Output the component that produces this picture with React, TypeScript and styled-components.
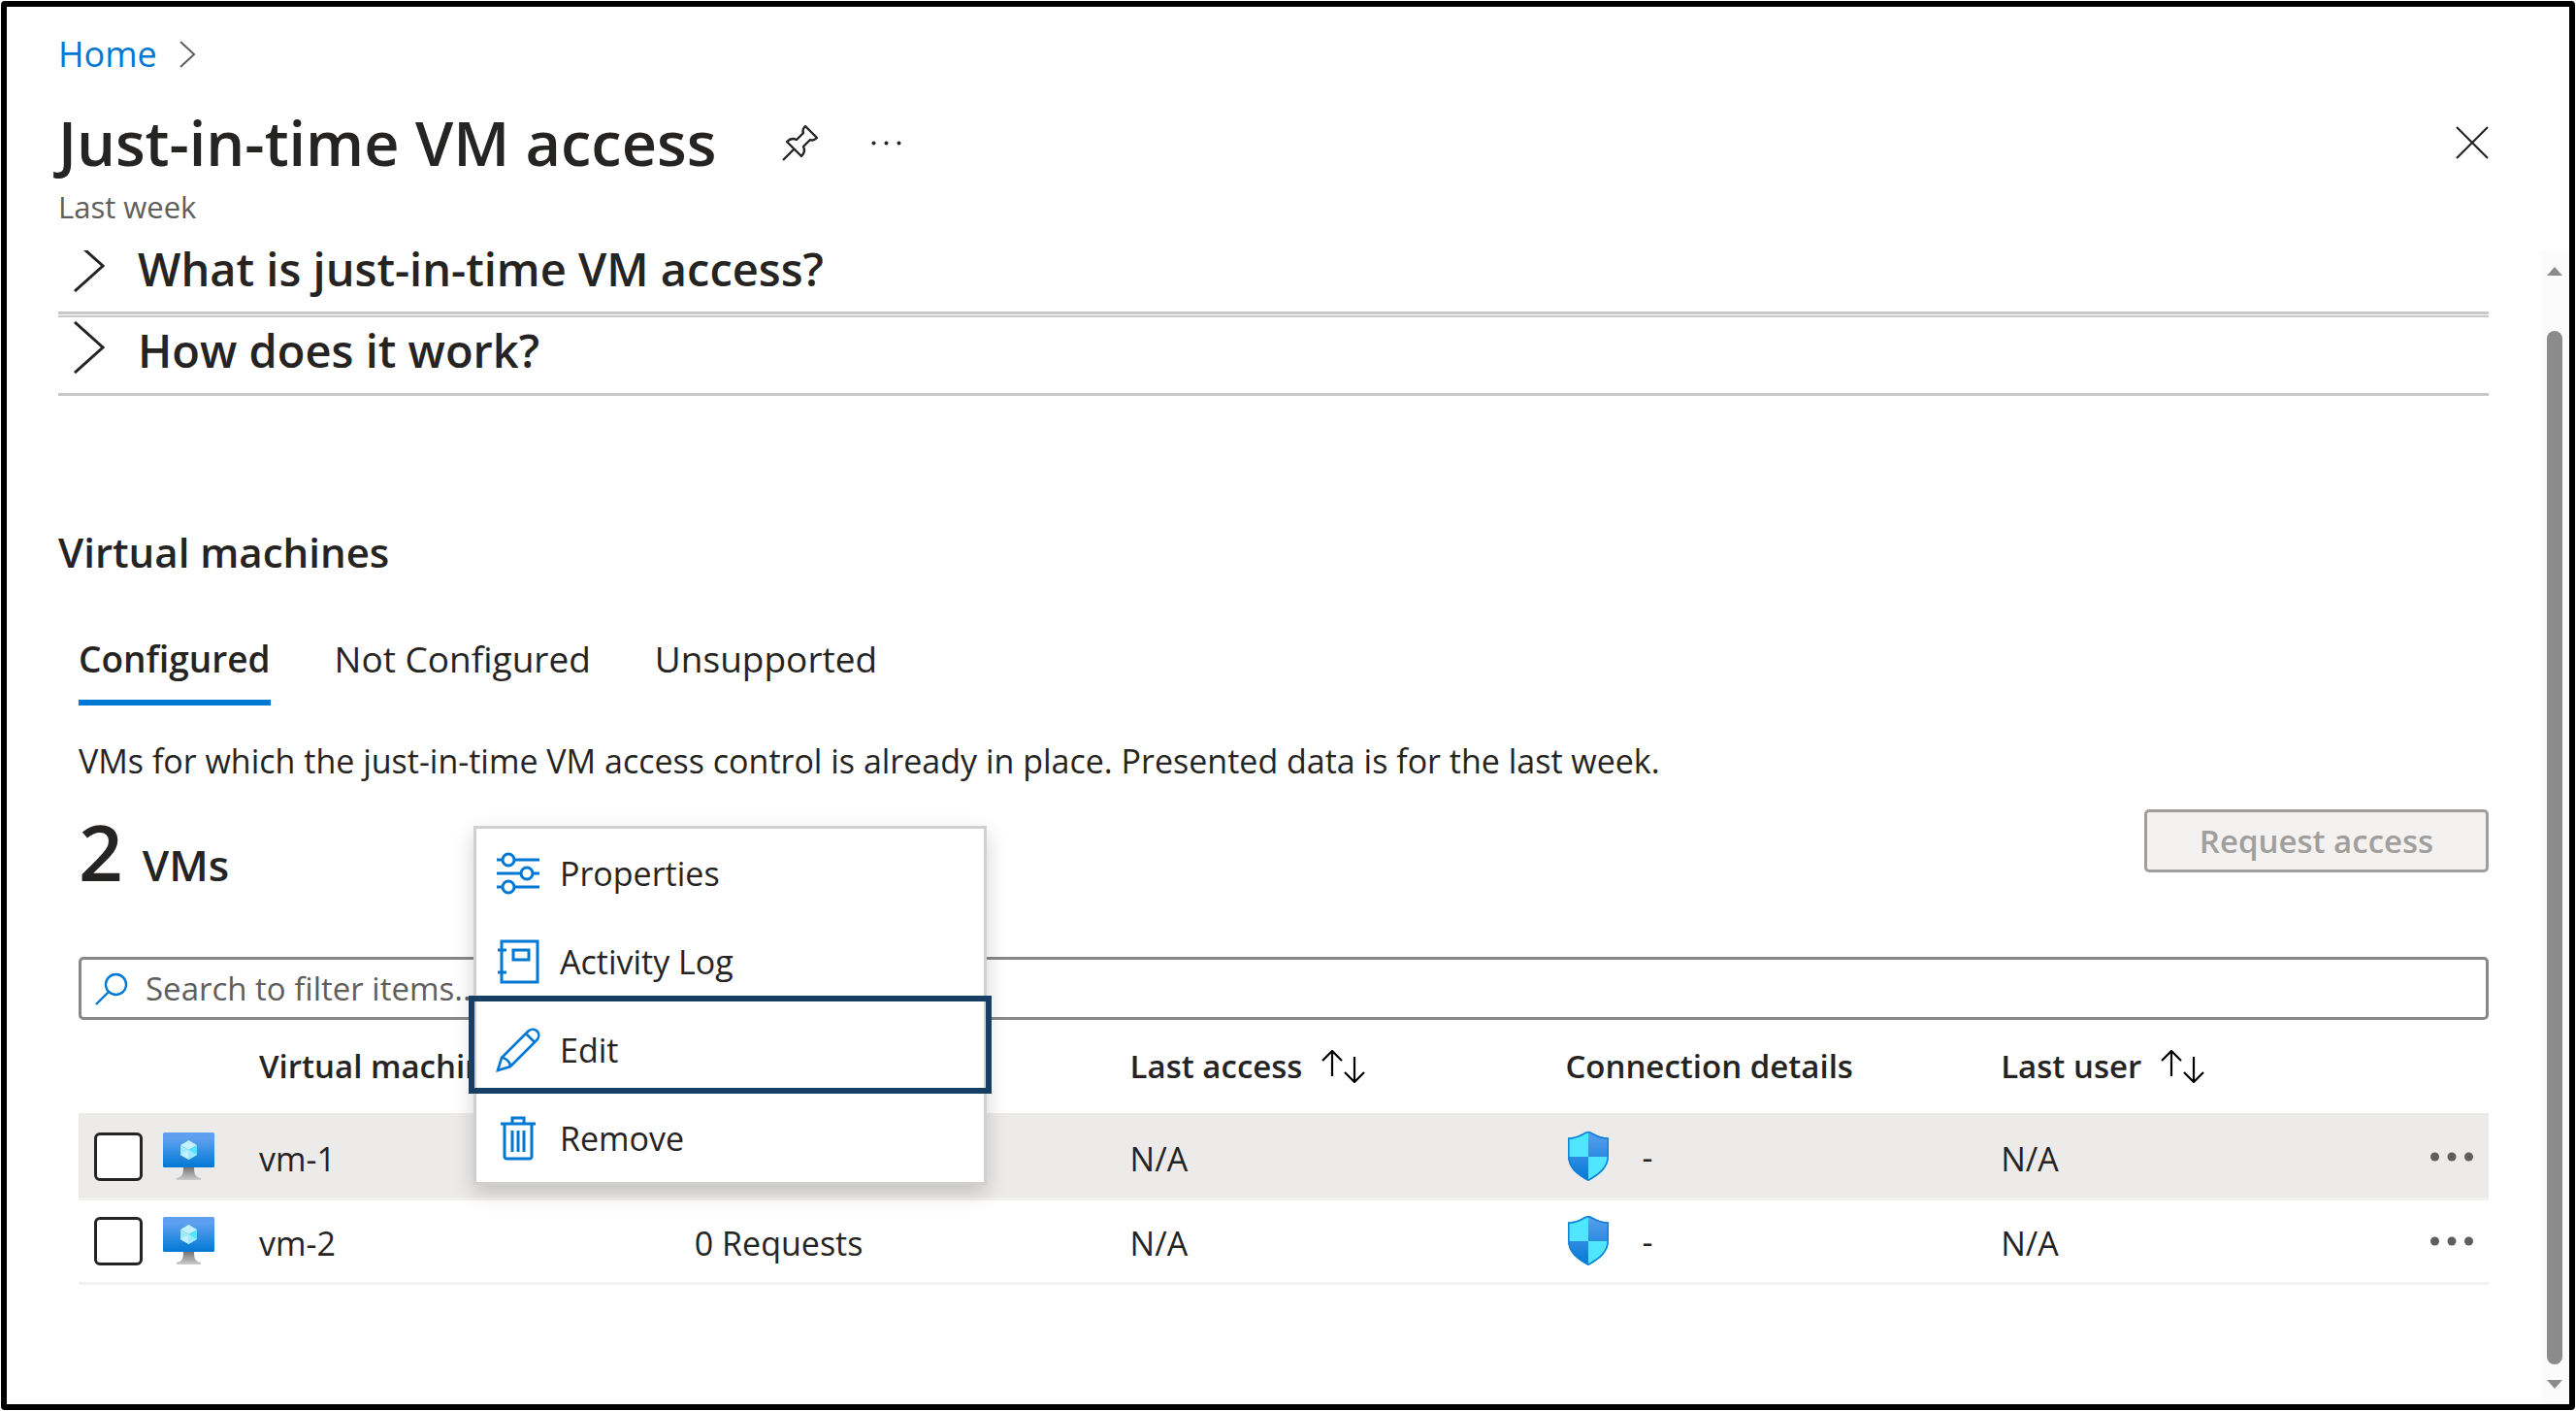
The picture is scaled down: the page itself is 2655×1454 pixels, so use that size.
import React from 'react';
import styled, { createGlobalStyle, css } from 'styled-components';

const GlobalStyle = createGlobalStyle`
  *, *::before, *::after { box-sizing: border-box; }
  body {
    margin: 0;
    background: #fff;
    color: #252423;
    font-family: 'Open Sans', 'Noto Sans', sans-serif;
    font-size: 34px;
    line-height: 48px;
  }
  button, input { font: inherit; color: inherit; }
  h1, h2, p { margin: 0; }
`;

const Frame = styled.div`
  height: 100vh;
  padding: 1px;
  background: #fff;
`;

const Blade = styled.main`
  height: 100%;
  display: flex;
  flex-direction: column;
  border: 6px solid #000;
  border-radius: 4px;
`;

const Header = styled.header`
  padding: 25px 83px 22px 53px;
`;

const Breadcrumb = styled.nav`
  display: flex;
  align-items: center;
  gap: 23px;
  color: #605e5c;
  font-size: 36px;
  line-height: 48px;
`;

const Link = styled.a`
  color: #0078d4;
  text-decoration: none;
`;

const TitleRow = styled.div`
  display: flex;
  align-items: center;
  margin-top: 24px;
`;

const Title = styled.h1`
  font-size: 63px;
  line-height: 86px;
  font-weight: 600;
  margin-right: 68px;
`;

const IconButton = styled.button`
  display: flex;
  padding: 0;
  border: 0;
  background: none;
  cursor: pointer;

  & + & { margin-left: 54px; }
  &:last-child { margin-left: auto; }
`;

const Subtitle = styled.p`
  font-size: 31px;
  line-height: 46px;
  color: #605e5c;
`;

const Body = styled.div`
  flex: 1;
  min-height: 0;
  display: flex;
`;

const Scroller = styled.div`
  flex: 1;
  min-width: 0;
  padding: 0 54px 0 53px;
`;

const HelpSection = styled.details`
  border-bottom: 3px solid #c8c8c8;

  & + & {
    margin-top: 1px;
    border-top: 2px solid #c8c8c8;
  }
`;

const HelpSummary = styled.summary<{ $clipped: boolean }>`
  height: ${p => (p.$clipped ? 63 : 78)}px;
  display: flex;
  align-items: flex-start;
  gap: 34px;
  padding: ${p => (p.$clipped ? 0 : 4)}px 0 0 16px;
  list-style: none;
  cursor: pointer;
`;

const HelpMark = styled.span<{ $clipped: boolean }>`
  height: ${p => (p.$clipped ? 43 : 54)}px;
  display: flex;
  align-items: flex-end;
  overflow: hidden;
`;

const HelpTitle = styled.span<{ $clipped: boolean }>`
  padding-top: ${p => (p.$clipped ? 0 : 11)}px;
  font-size: 47px;
  line-height: 38px;
  font-weight: 600;
`;

const SectionTitle = styled.h2`
  margin-top: 131px;
  font-size: 42px;
  line-height: 60px;
  font-weight: 600;
`;

const Panel = styled.section`
  position: relative;
  padding-left: 21px;
`;

const TabList = styled.div`
  display: flex;
  gap: 66px;
  margin-top: 54px;
`;

const Tab = styled.button<{ $active?: boolean }>`
  padding: 0 0 16px;
  border: 0;
  border-bottom: 6px solid ${p => (p.$active ? '#0078d4' : 'transparent')};
  background: none;
  font-size: 37px;
  line-height: 52px;
  font-weight: ${p => (p.$active ? 600 : 400)};
  cursor: pointer;
`;

const Description = styled.p`
  margin-top: 33px;
`;

const Toolbar = styled.div`
  display: flex;
  align-items: flex-start;
  justify-content: space-between;
  margin-top: 26px;
`;

const Count = styled.p`
  display: flex;
  align-items: baseline;
  gap: 20px;
  font-size: 44px;
  line-height: 86px;
  font-weight: 600;
`;

const CountValue = styled.span`
  font-size: 80px;
`;

const RequestButton = styled.button`
  width: 355px;
  height: 65px;
  border: 3px solid #a19f9d;
  border-radius: 5px;
  background: #f3f2f1;
  color: #a19f9d;
  font-size: 33px;
  font-weight: 600;
`;

const SearchBox = styled.label`
  display: flex;
  align-items: center;
  gap: 18px;
  height: 65px;
  margin-top: 52px;
  padding: 0 14px;
  border: 3px solid #8a8886;
  border-radius: 5px;
`;

const SearchInput = styled.input`
  flex: 1;
  min-width: 0;
  padding: 0;
  border: 0;
  outline: 0;
  background: none;
  font-size: 33px;

  &::placeholder { color: #605e5c; opacity: 1; }
`;

const Table = styled.table`
  width: 100%;
  table-layout: fixed;
  border-collapse: separate;
  border-spacing: 0;
`;

const SelectCol = styled.col` width: 186px; `;
const ActionCol = styled.col` width: 54px; `;

const HeadCell = styled.th`
  height: 99px;
  padding: 0;
  border-bottom: 3px solid #edebe9;
  text-align: left;
  font-size: 33px;
  font-weight: 600;
  white-space: nowrap;
`;

const Row = styled.tr<{ $selected?: boolean }>`
  background: ${p => (p.$selected ? '#edebe9' : 'transparent')};
`;

const Cell = styled.td<{ $text?: boolean }>`
  height: 87px;
  padding: ${p => (p.$text ? '4px 0 0' : '0')};
  border-bottom: 3px solid #f3f2f1;
  white-space: nowrap;
`;

const Inline = styled.div<{ $gap: number; $end?: boolean }>`
  display: flex;
  align-items: center;
  gap: ${p => p.$gap}px;
  ${p => p.$end && css`
    justify-content: flex-end;
    padding-right: 16px;
  `}
`;

const Checkbox = styled.input`
  appearance: none;
  width: 50px;
  height: 50px;
  margin: 0 0 0 16px;
  border: 3px solid #252423;
  border-radius: 6px;
  background: #fff;
`;

const Menu = styled.div`
  position: absolute;
  top: 198px;
  left: 428px;
  width: 529px;
  border: 3px solid #d2d0ce;
  background: #fff;
  box-shadow: 0 8px 20px rgba(0, 0, 0, 0.18);
`;

const MenuItem = styled.button<{ $focused?: boolean }>`
  position: relative;
  width: 100%;
  height: 91px;
  display: flex;
  align-items: center;
  gap: 20px;
  padding: 0 20px;
  border: 0;
  background: none;
  text-align: left;
  cursor: pointer;

  ${p => p.$focused && css`
    &::after {
      content: '';
      position: absolute;
      inset: -10px -8px 0;
      border: 6px solid #173f66;
    }
  `}
`;

const Scrollbar = styled.div`
  width: 29px;
  display: flex;
  flex-direction: column;
  align-items: center;
  gap: 16px;
  padding: 17px 2px 16px 0;
  background: #fbfbfb;
`;

const Thumb = styled.div`
  flex: 1;
  width: 16px;
  margin-top: 41px;
  border-radius: 8px;
  background: #8b8b8b;
`;

const Chevron = ({ w, h, stroke }: { w: number; h: number; stroke: number }) => (
  <svg width={w} height={h} viewBox={`0 0 ${w} ${h}`} fill="none" stroke="currentColor" strokeWidth={stroke} style={{ flexShrink: 0 }} aria-hidden>
    <path d={`M1 1L${w - 2} ${h / 2}L1 ${h - 1}`} />
  </svg>
);

const PinIcon = () => (
  <svg width="38" height="38" viewBox="0 0 38 38" fill="none" stroke="#252423" strokeWidth="2.4" strokeLinejoin="round" aria-hidden>
    <path d="M1 37L12 26M24 2L36 14C33 17 31 17 29 16L22 23C24 27 23 30 20 33L5 18C8 15 11 14 15 16L22 9C21 7 21 5 24 2Z" />
  </svg>
);

const SmallDots = () => (
  <svg width="31" height="5" viewBox="0 0 31 5" fill="#252423" aria-hidden>
    <circle cx="2.5" cy="2.5" r="2" /><circle cx="15.5" cy="2.5" r="2" /><circle cx="28.5" cy="2.5" r="2" />
  </svg>
);

const CloseIcon = () => (
  <svg width="34" height="34" viewBox="0 0 34 34" stroke="#252423" strokeWidth="2.2" aria-hidden>
    <path d="M1 1L33 33M33 1L1 33" />
  </svg>
);

const SearchIcon = () => (
  <svg width="34" height="34" viewBox="0 0 34 34" fill="none" stroke="#0078d4" strokeWidth="2.4" aria-hidden>
    <circle cx="21.5" cy="12.5" r="10.5" /><path d="M14 20L1 33" />
  </svg>
);

const SortIcon = () => (
  <svg width="45" height="34" viewBox="0 0 45 34" fill="none" stroke="#000" strokeWidth="2.2" aria-hidden>
    <path d="M11 27V1M1 11L11 1L21 11M34 7V33M24 23L34 33L44 23" />
  </svg>
);

const VmIcon = ({ id }: { id: string }) => (
  <svg width="53" height="50" viewBox="0 0 53 50" aria-hidden>
    <defs>
      <linearGradient id={`${id}-screen`} x1="0" y1="1" x2="0" y2="0">
        <stop offset="0" stopColor="#0078d4" /><stop offset="0.82" stopColor="#5ea0ef" />
      </linearGradient>
      <linearGradient id={`${id}-stand`} x1="0" y1="1" x2="0" y2="0">
        <stop offset="0" stopColor="#cccccc" /><stop offset="1" stopColor="#707070" />
      </linearGradient>
    </defs>
    <path d="M21 35H32C32 43 33 46 39 47V49H14V47C20 46 21 43 21 35Z" fill={`url(#${id}-stand)`} />
    <rect width="53" height="36" rx="1.5" fill={`url(#${id}-screen)`} />
    <path d="M35 13V23L26.500 28V18Z" fill="#50e6ff" />
    <path d="M35 13L26.500 18L18 13L26.500 8Z" fill="#c3f1ff" />
    <path d="M26.500 18V28L18 23V13Z" fill="#9cebff" />
    <path d="M18 23L26.500 18V28Z" fill="#c3f1ff" />
    <path d="M35 23L26.500 18V28Z" fill="#9cebff" />
  </svg>
);

const ShieldIcon = ({ id }: { id: string }) => {
  const outline = 'M22 1C27 1 30 7 43 7.500V26C43 39 33 46 22 52C11 46 1 39 1 26V7.500C14 7 17 1 22 1Z';
  return (
    <svg width="46" height="55" viewBox="-2 0 46 55" aria-hidden>
      <defs>
        <linearGradient id={`${id}-fill`} x1="0" y1="1" x2="0" y2="0">
          <stop offset="0" stopColor="#0078d4" /><stop offset="1" stopColor="#5ea0ef" />
        </linearGradient>
        <clipPath id={`${id}-clip`}><path d={outline} /></clipPath>
      </defs>
      <g clipPath={`url(#${id}-clip)`}>
        <rect width="44" height="53" fill={`url(#${id}-fill)`} />
        <rect width="22" height="27" fill="#50e6ff" />
        <rect x="22" y="27" width="22" height="26" fill="#50e6ff" />
        <path d={outline} fill="none" stroke="#0f7fd8" strokeWidth="3" />
      </g>
    </svg>
  );
};

const MoreIcon = () => (
  <svg width="44" height="10" viewBox="0 0 44 10" fill="#605e5c" aria-hidden>
    <circle cx="4.500" cy="5" r="4.500" /><circle cx="22" cy="5" r="4.500" /><circle cx="39.500" cy="5" r="4.500" />
  </svg>
);

const menuIconProps = {
  width: 46, height: 46, viewBox: '0 0 46 46', fill: 'none', stroke: '#0078d4', strokeWidth: 3, 'aria-hidden': true,
};

const PropertiesIcon = () => (
  <svg {...menuIconProps}>
    <path d="M1 9H7M19 9H45M1 23H26M38 23H45M1 37H7M19 37H45" />
    <circle cx="13" cy="9" r="6" /><circle cx="32" cy="23" r="6" /><circle cx="13" cy="37" r="6" />
  </svg>
);

const LogIcon = () => (
  <svg {...menuIconProps}>
    <path d="M6 2H43V44H6ZM18 11H34V21H18ZM2 11H11M2 34H11" />
  </svg>
);

const EditIcon = () => (
  <svg {...menuIconProps} strokeWidth={2.6}>
    <path d="M2 44L6 31L33 4C36 1 40 1 42.500 3.500C45 6 45 10 42 13L15 40ZM31 6L40 15M6 31C10 31 15 35 15 40" />
  </svg>
);

const RemoveIcon = () => (
  <svg {...menuIconProps}>
    <path d="M5 8H41M17 8V2H29V8M9 8V42C9 43 10 44 11 44H35C36 44 37 43 37 42V8M17 15V37M23 15V37M29 15V37" />
  </svg>
);

const Arrow = ({ down }: { down?: boolean }) => (
  <svg width="16" height="9" viewBox="0 0 16 9" fill="#8b8b8b" aria-hidden>
    <path d={down ? 'M0 0H16L8 9Z' : 'M0 9H16L8 0Z'} />
  </svg>
);

const menuItems = [
  { label: 'Properties', Icon: PropertiesIcon },
  { label: 'Activity Log', Icon: LogIcon },
  { label: 'Edit', Icon: EditIcon, focused: true },
  { label: 'Remove', Icon: RemoveIcon },
];

const machines = [
  { name: 'vm-1', requests: '0 Requests', lastAccess: 'N/A', connection: '-', user: 'N/A', selected: true },
  { name: 'vm-2', requests: '0 Requests', lastAccess: 'N/A', connection: '-', user: 'N/A', selected: false },
];

const columns = [
  { label: 'Virtual machine', sortable: true },
  { label: 'Approved', sortable: true },
  { label: 'Last access', sortable: true },
  { label: 'Connection details', sortable: false },
  { label: 'Last user', sortable: true },
];

const helpTopics = [
  { title: 'What is just-in-time VM access?', clipped: true },
  { title: 'How does it work?', clipped: false },
];

export default function App() {
  return (
    <Frame>
      <GlobalStyle />
      <Blade>
        <Header>
          <Breadcrumb aria-label="Breadcrumb">
            <Link href="#home">Home</Link>
            <Chevron w={17} h={28} stroke={2} />
          </Breadcrumb>
          <TitleRow>
            <Title>Just-in-time VM access</Title>
            <IconButton aria-label="Pin"><PinIcon /></IconButton>
            <IconButton aria-label="More"><SmallDots /></IconButton>
            <IconButton aria-label="Close"><CloseIcon /></IconButton>
          </TitleRow>
          <Subtitle>Last week</Subtitle>
        </Header>
        <Body>
          <Scroller>
            <div>
              {helpTopics.map(({ title, clipped }) => (
                <HelpSection key={title}>
                  <HelpSummary $clipped={clipped}>
                    <HelpMark $clipped={clipped}><Chevron w={32} h={54} stroke={3} /></HelpMark>
                    <HelpTitle $clipped={clipped}>{title}</HelpTitle>
                  </HelpSummary>
                </HelpSection>
              ))}
            </div>
            <SectionTitle>Virtual machines</SectionTitle>
            <Panel>
              <TabList role="tablist">
                <Tab role="tab" aria-selected $active>Configured</Tab>
                <Tab role="tab">Not Configured</Tab>
                <Tab role="tab">Unsupported</Tab>
              </TabList>
              <Description>
                VMs for which the just-in-time VM access control is already in place. Presented data is for the last week.
              </Description>
              <Toolbar>
                <Count><CountValue>2</CountValue>VMs</Count>
                <RequestButton disabled>Request access</RequestButton>
              </Toolbar>
              <SearchBox>
                <SearchIcon />
                <SearchInput type="text" aria-label="Search to filter items" placeholder="Search to filter items..." />
              </SearchBox>
              <Table>
                <colgroup>
                  <SelectCol />
                  {columns.map(c => <col key={c.label} />)}
                  <ActionCol />
                </colgroup>
                <thead>
                  <tr>
                    <HeadCell aria-label="Select" />
                    {columns.map(c => (
                      <HeadCell key={c.label} scope="col">
                        <Inline $gap={20}>{c.label}{c.sortable && <SortIcon />}</Inline>
                      </HeadCell>
                    ))}
                    <HeadCell aria-label="Actions" />
                  </tr>
                </thead>
                <tbody>
                  {machines.map(m => (
                    <Row key={m.name} $selected={m.selected}>
                      <Cell>
                        <Inline $gap={21}>
                          <Checkbox type="checkbox" aria-label={`Select ${m.name}`} />
                          <VmIcon id={m.name} />
                        </Inline>
                      </Cell>
                      <Cell $text>{m.name}</Cell>
                      <Cell $text>{m.requests}</Cell>
                      <Cell $text>{m.lastAccess}</Cell>
                      <Cell>
                        <Inline $gap={33}><ShieldIcon id={`shield-${m.name}`} />{m.connection}</Inline>
                      </Cell>
                      <Cell $text>{m.user}</Cell>
                      <Cell>
                        <Inline $gap={0} $end>
                          <IconButton aria-label={`Actions for ${m.name}`}><MoreIcon /></IconButton>
                        </Inline>
                      </Cell>
                    </Row>
                  ))}
                </tbody>
              </Table>
              <Menu role="menu">
                {menuItems.map(({ label, Icon, focused }) => (
                  <MenuItem key={label} role="menuitem" $focused={focused}><Icon />{label}</MenuItem>
                ))}
              </Menu>
            </Panel>
          </Scroller>
          <Scrollbar aria-hidden>
            <Arrow />
            <Thumb />
            <Arrow down />
          </Scrollbar>
        </Body>
      </Blade>
    </Frame>
  );
}
